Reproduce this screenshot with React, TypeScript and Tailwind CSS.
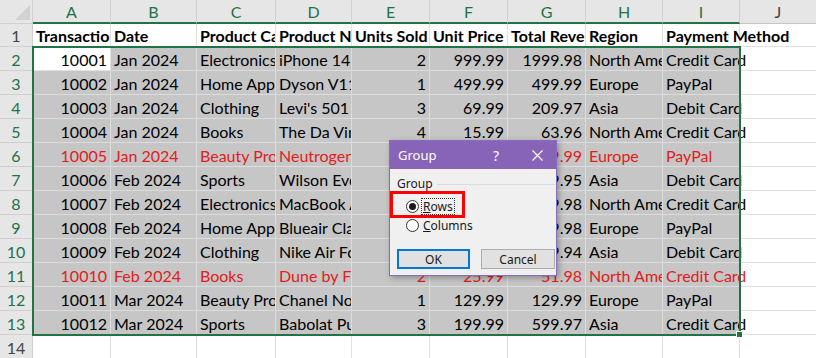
import React from 'react';

const W = ['w-[78px]', 'w-[86px]', 'w-[79px]', 'w-[76px]', 'w-[78px]', 'w-[78px]', 'w-[78px]', 'w-[77px]', 'w-[77px]'];
const LETTERS = ['A', 'B', 'C', 'D', 'E', 'F', 'G', 'H', 'I'];
const NUMERIC = [true, false, false, false, true, true, true, false, false];

const HEAD = ['Transaction ID', 'Date', 'Product Category', 'Product Name', 'Units Sold', 'Unit Price', 'Total Revenue', 'Region', 'Payment Method'];

const ROWS: { v: string[]; red?: boolean }[] = [
  { v: ['10001', 'Jan 2024', 'Electronics', 'iPhone 14', '2', '999.99', '1999.98', 'North America', 'Credit Card'] },
  { v: ['10002', 'Jan 2024', 'Home Appliances', 'Dyson V11', '1', '499.99', '499.99', 'Europe', 'PayPal'] },
  { v: ['10003', 'Jan 2024', 'Clothing', "Levi's 501", '3', '69.99', '209.97', 'Asia', 'Debit Card'] },
  { v: ['10004', 'Jan 2024', 'Books', 'The Da Vinci Code', '4', '15.99', '63.96', 'North America', 'Credit Card'] },
  { v: ['10005', 'Jan 2024', 'Beauty Products', 'Neutrogena Hydro Boost', '1', '19.99', '19.99', 'Europe', 'PayPal'], red: true },
  { v: ['10006', 'Feb 2024', 'Sports', 'Wilson Evolution', '5', '29.99', '149.95', 'Asia', 'Debit Card'] },
  { v: ['10007', 'Feb 2024', 'Electronics', 'MacBook Air M2', '2', '1199.99', '2399.98', 'North America', 'Credit Card'] },
  { v: ['10008', 'Feb 2024', 'Home Appliances', 'Blueair Classic', '2', '599.99', '1199.98', 'Europe', 'PayPal'] },
  { v: ['10009', 'Feb 2024', 'Clothing', 'Nike Air Force 1', '6', '89.99', '539.94', 'Asia', 'Debit Card'] },
  { v: ['10010', 'Feb 2024', 'Books', 'Dune by Frank Herbert', '2', '25.99', '51.98', 'North America', 'Credit Card'], red: true },
  { v: ['10011', 'Mar 2024', 'Beauty Products', 'Chanel No. 5', '1', '129.99', '129.99', 'Europe', 'PayPal'] },
  { v: ['10012', 'Mar 2024', 'Sports', 'Babolat Pure Drive', '3', '199.99', '599.97', 'Asia', 'Credit Card'] },
];

function RowHead({ n, sel }: { n: number; sel?: boolean }) {
  return (
    <div
      className={`w-[33px] shrink-0 h-full flex items-end justify-center pb-[1px] bg-[#e6e6e6] border-r border-b border-[#d0d0d0] ${
        sel ? 'text-[#217346]' : 'text-[#444444]'
      }`}
    >
      {n}
    </div>
  );
}

function Cell({ i, text, sel, active, bold, red, right }: { i: number; text: string; sel?: boolean; active?: boolean; bold?: boolean; red?: boolean; right?: boolean }) {
  const last = i === 8;
  return (
    <div
      className={`${W[i]} shrink-0 h-full flex items-end pb-[1px] px-[3px] whitespace-nowrap border-r border-b ${
        last ? 'overflow-visible' : 'overflow-hidden'
      } ${right ? 'justify-end' : 'justify-start'} ${
        sel && !active ? 'bg-[#c6c6c6] border-[#dcdcdc]' : 'bg-white border-[#e1e1e1]'
      } ${bold ? 'font-bold' : ''} ${red ? 'text-[#e0201c]' : 'text-black'}`}
    >
      {text}
    </div>
  );
}

function Dialog() {
  return (
    <div className="absolute left-[389px] top-[140px] w-[168px] h-[136px] bg-[#f0f0f0] border border-[#8a6bbf] shadow-[2px_2px_6px_rgba(0,0,0,0.3)] flex flex-col font-['Noto_Sans',sans-serif] text-[12px] text-[#1a1a1a]">
      <div className="h-[28px] shrink-0 bg-[#8764b8] flex items-center pl-[8px] text-white text-[13px]">
        <span className="flex-1">Group</span>
        <span className="w-[12px] text-center mr-[30px] text-[14px]">?</span>
        <svg width="11" height="11" viewBox="0 0 11 11" className="mr-[13px]">
          <path d="M0.5 0.5 L10.5 10.5 M10.5 0.5 L0.5 10.5" stroke="white" strokeWidth="1.2" fill="none" />
        </svg>
      </div>
      <div className="relative flex-1 flex flex-col pl-[7px] pt-[7px]">
        <div className="flex items-center h-[16px] pr-[1px]">
          <span className="leading-[16px]">Group</span>
          <div className="flex-1 h-px bg-[#dcdcdc] ml-[4px]" />
        </div>
        <div className="flex items-center h-[18px] mt-[5px] pl-[9px]">
          <div className="w-[13px] h-[13px] rounded-full border border-[#333333] bg-white flex items-center justify-center">
            <div className="w-[7px] h-[7px] rounded-full bg-[#1a1a1a]" />
          </div>
          <span className="ml-[2px] border border-dotted border-[#333333] px-[1px] h-[17px] leading-[15px]">
            <span className="underline">R</span>ows
          </span>
        </div>
        <div className="flex items-center h-[18px] mt-[1px] pl-[9px]">
          <div className="w-[13px] h-[13px] rounded-full border border-[#333333] bg-white" />
          <span className="ml-[4px] leading-[15px]">
            <span className="underline">C</span>olumns
          </span>
        </div>
        <div className="flex gap-[11px] mt-[15px]">
          <div className="w-[73px] h-[20px] border-2 border-[#0078d7] bg-[#e1e1e1] flex items-center justify-center">OK</div>
          <div className="w-[74px] h-[20px] border border-[#adadad] bg-[#e1e1e1] flex items-center justify-center">Cancel</div>
        </div>
        <div className="absolute left-0 top-[22px] w-[75px] h-[27px] border-[3px] border-[#ff0000]" />
      </div>
    </div>
  );
}

export default function App() {
  return (
    <div className="relative w-[816px] h-[358px] overflow-hidden bg-white font-['Lato',sans-serif] text-[16px] leading-[19px]">
      <div className="flex flex-col">
        {/* column headers */}
        <div className="flex h-[24px]">
          <div className="w-[33px] shrink-0 h-full bg-[#e6e6e6] border-r border-b border-[#d0d0d0] relative">
            <svg width="33" height="24" className="absolute inset-0">
              <polygon points="15,20 30,20 30,5" fill="#d2d2d2" />
            </svg>
          </div>
          {LETTERS.map((l, i) => (
            <div
              key={l}
              className={`${W[i]} shrink-0 h-full flex items-center justify-center bg-[#e6e6e6] border-r border-[#d0d0d0] border-b-2 border-b-[#217346] text-[#217346]`}
            >
              {l}
            </div>
          ))}
          <div className="flex-1 h-full flex items-center justify-center bg-[#e6e6e6] border-b border-[#c6c6c6] text-[#444444]">J</div>
        </div>

        {/* row 1 */}
        <div className="flex h-[23px]">
          <RowHead n={1} />
          {HEAD.map((h, i) => (
            <Cell key={i} i={i} text={h} bold />
          ))}
          <div className="flex-1 h-full border-b border-[#e1e1e1]" />
        </div>

        {ROWS.map((r, ri) => (
          <div key={ri} className="flex h-[24px]">
            <RowHead n={ri + 2} sel />
            {r.v.map((v, i) => (
              <Cell key={i} i={i} text={v} sel active={ri === 0 && i === 0} red={r.red} right={NUMERIC[i]} />
            ))}
            <div className="flex-1 h-full border-b border-[#e1e1e1]" />
          </div>
        ))}

        {/* row 14 */}
        <div className="flex h-[24px]">
          <RowHead n={14} />
          {W.map((w, i) => (
            <div key={i} className={`${w} shrink-0 h-full border-r border-b border-[#e1e1e1]`} />
          ))}
          <div className="flex-1 h-full border-b border-[#e1e1e1]" />
        </div>
      </div>

      {/* selection frame + fill handle */}
      <div className="absolute left-[32px] top-[46px] w-[709px] h-[290px] border-2 border-[#217346] pointer-events-none" />
      <div className="absolute left-[736px] top-[331px] w-[7px] h-[7px] bg-[#217346] border border-white" />

      <Dialog />
    </div>
  );
}
